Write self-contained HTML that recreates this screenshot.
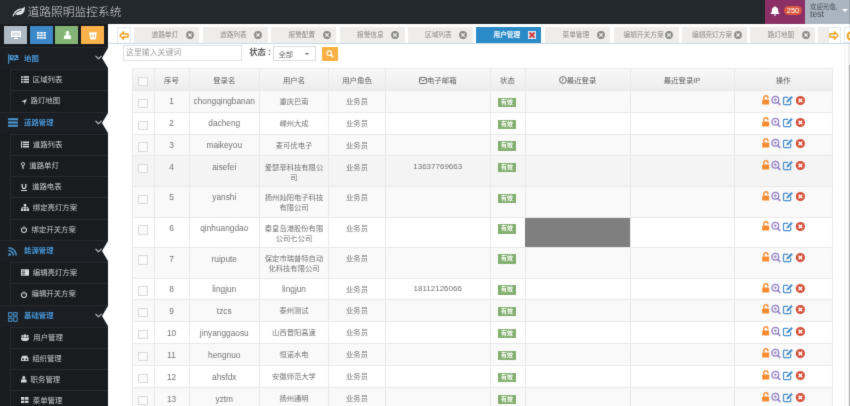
<!DOCTYPE html>
<html lang="zh-CN">
<head>
<meta charset="utf-8">
<title>道路照明监控系统</title>
<style>
html,body{margin:0;padding:0;}
html{overflow:hidden;}
body{width:850px;height:406px;overflow:hidden;background:#fff;position:relative;font-family:"Liberation Sans","Noto Sans CJK SC",sans-serif;font-size:8px;color:#666;}
.abs{position:absolute;}
#navbar{left:0;top:0;width:850px;height:23.5px;background:#22282e;}
#brand{left:27.5px;top:1.5px;font-size:11.75px;font-weight:300;color:#dadada;line-height:20px;white-space:nowrap;}
#w{left:0;top:0;width:850px;height:424px;background:#fff;filter:url(#soft);}
#sidebar{left:0;top:23.5px;width:108px;height:400px;background:#191c1f;}
.sc{top:25.9px;height:18.2px;width:23px;}
.mh{left:0;width:108px;height:21.400px;background:#1b1e22;border-top:1px solid #272b30;box-sizing:border-box;}
.ms{left:10px;width:98px;height:21.400px;border-top:1px solid #272b30;border-left:1px solid #272b30;box-sizing:border-box;}
.mt{white-space:nowrap;line-height:10px;font-size:7.4px;}
.mh .mt{color:#4592d2;font-weight:bold;top:5px;}
.ms .mt{color:#c8cbcf;top:5px;}
.ic{display:block;}
.notch{left:101.7px;width:0;height:0;border-top:10px solid transparent;border-bottom:10px solid transparent;border-right:6.5px solid #fff;}
#tabbar{left:108px;top:23.5px;width:742px;height:20.5px;background:#fff;border-bottom:1.4px solid #cad9e3;box-sizing:border-box;}
.tab{top:27.2px;height:16px;background:#efedec;color:#8a8a8a;font-size:6.7px;line-height:15.5px;white-space:nowrap;}
.tab span.t{position:absolute;top:0;}
.tab.act{background:#2b8bc9;color:#fff;font-weight:bold;}
.cl{position:absolute;top:4px;width:8px;height:8px;}
table{border-collapse:collapse;}
.cell{box-sizing:border-box;border-left:1px solid #e3e3e3;border-top:1px solid #e3e3e3;text-align:center;white-space:nowrap;line-height:10.500px;}
.cb{width:9.5px;height:9.5px;border:1px solid #dadada;background:#fbfbfb;box-sizing:border-box;}
.badge{background:#82af6f;color:#fff;font-size:6px;line-height:9.500px;width:18px;height:9.500px;text-align:center;font-weight:bold;}
</style>
</head>
<body>
<div class="abs" style="left:0;top:0;width:850px;height:23.5px;background:#22282e"></div>
<div class="abs" style="left:0;top:23.5px;width:108px;height:383px;background:#191c1f"></div>
<div class="abs" style="left:805px;top:0;width:45px;height:23.5px;background:#aab5c1"></div>
<svg width="0" height="0" style="position:absolute"><defs><filter id="soft" x="0" y="0" width="100%" height="100%" color-interpolation-filters="sRGB"><feConvolveMatrix order="3" kernelMatrix="0.018 0.135 0.018 0.135 1 0.135 0.018 0.135 0.018" divisor="1.612" edgeMode="duplicate" preserveAlpha="true"/></filter></defs></svg>
<div id="w" class="abs">
<div id="navbar" class="abs"></div>
<svg class="abs" style="left:12px;top:6px" width="13" height="11" viewBox="0 0 13 11"><path d="M0.5 10.500C1.5 6.500 4 3.500 8 2.800c2-.3 3.500-.6 4.800-2.300.3 3.500-.6 7.400-4.800 8.300-2 .4-3.800-.2-4.800-.6-.9.600-1.500 1.500-1.800 2.300z" fill="#dfe3e6"/><path d="M2.500 8.200C4.500 5.800 6.500 4.800 9.500 4.200" stroke="#22282e" stroke-width=".9" fill="none"/></svg>
<div id="brand" class="abs">道路照明监控系统</div>
<div class="abs" style="left:764.5px;top:0;width:40.5px;height:23.5px;background:#8b2f66"></div>
<svg class="abs" style="left:770px;top:6px" width="10" height="10" viewBox="0 0 10 10"><path d="M5 0.300c.5 0 .8.300.8.700 1.700.400 2.400 1.900 2.400 3.600 0 1.500.5 2.500 1.500 3.300h-9.400c1-.8 1.500-1.800 1.500-3.300 0-1.700.7-3.200 2.400-3.600 0-.4.300-.7.800-.7z" fill="#fff"/><path d="M3.800 8.500a1.200 1.200 0 0 0 2.400 0z" fill="#fff"/></svg>
<div class="abs" style="left:784px;top:5.5px;width:18px;height:9px;border-radius:4.5px;background:#d9593f;color:#fff;font-size:7.5px;line-height:9px;text-align:center;">250</div>
<div class="abs" style="left:805px;top:0;width:45px;height:23.5px;background:#aab5c1"></div>
<div class="abs" style="left:810px;top:2.7px;font-size:6.4px;line-height:8px;color:#4a4f55;white-space:nowrap;">欢迎光临,</div>
<div class="abs" style="left:810px;top:10.3px;font-size:8.7px;line-height:9px;color:#4a4f55;white-space:nowrap;">test</div>
<div class="abs" style="left:842px;top:9px;width:0;height:0;border-left:3.5px solid transparent;border-right:3.5px solid transparent;border-top:3.5px solid #fff;"></div>
<div id="sidebar" class="abs"></div>
<div class="abs sc" style="left:4.2px;background:#adb9c4"><svg width="10" height="8" viewBox="0 0 10 8" style="position:absolute;left:6.7px;top:5.6px"><path d="M0.600 0.600h8.800v4.800h-8.800z" fill="#d9dfe5" stroke="#fff" stroke-width="1.200"/><path d="M3 7.500h4M5 5.500v2" stroke="#fff" stroke-width="1.100"/></svg></div>
<div class="abs sc" style="left:29.7px;background:#3c88c9"><svg width="9" height="7" viewBox="0 0 9 7" style="position:absolute;left:7.200px;top:6.200px"><path d="M0 0h2.600v1.800h-2.600zM3.200 0h2.600v1.800h-2.600zM6.400 0h2.600v1.800h-2.600zM0 2.500h2.600v1.800h-2.600zM3.200 2.500h2.600v1.800h-2.600zM6.400 2.500h2.600v1.800h-2.600zM0 5h2.600v1.800h-2.600zM3.200 5h2.600v1.800h-2.600zM6.400 5h2.600v1.800h-2.600z" fill="#f4f8fc"/></svg></div>
<div class="abs sc" style="left:55.2px;background:#85b576"><svg width="7" height="8" viewBox="0 0 7 8" style="position:absolute;left:8.400px;top:5.600px"><circle cx="3.500" cy="2" r="1.900" fill="#fff"/><path d="M0 8v-2c0-1.300 1-1.900 2-1.900h3c1 0 2 .6 2 1.900v2z" fill="#fff"/></svg></div>
<div class="abs sc" style="left:80.7px;background:#fbb24a"><svg width="8" height="8" viewBox="0 0 8 8" style="position:absolute;left:8.200px;top:6px"><path d="M0.200 0.300h7.600l-.9 6.400c-.1.600-.5.900-1.100.9h-3.600c-.6 0-1-.3-1.100-.9z" fill="#fff"/><path d="M2.800 2.200v3.600M5.200 2.200v3.600" stroke="#fbb854" stroke-width=".8"/></svg></div>
<div class="abs mh" style="top:47.2px"><span class="abs" style="left:8px;top:5.7px"><svg width="11" height="10" viewBox="0 0 11 10"><path d="M0.700 0.300v9.400" stroke="#4a9ad8" stroke-width="1.200" fill="none"/><path d="M1.800 1.200c1.500-.8 2.700.5 4.200.2 1.500-.3 2.800-.8 4.300-.2v5c-1.500-.6-2.800-.1-4.300.2-1.500.3-2.700-1-4.200-.2z" fill="#4a9ad8"/><path d="M3.200 2.300h1.600v1.500h-1.600zM6.300 2.600h1.600v1.500h-1.600zM4.800 3.900h1.500v1.500h-1.500zM7.900 3.900h1.500v1.400h-1.500z" fill="#1b1e22"/></svg></span><span class="abs mt" style="left:24px;top:5.7px">地图</span><svg class="abs" style="left:94.5px;top:7.2px" width="7" height="5" viewBox="0 0 7 5"><path d="M0.5 0.8L3.500 3.800L6.500 0.800" fill="none" stroke="#c8ccd0" stroke-width="1.100"/></svg></div>
<div class="abs notch" style="top:47.9px"></div>
<div class="abs ms" style="top:68.8px"><span class="abs" style="left:10px;top:5.8px"><svg width="8" height="7" viewBox="0 0 8 7"><path d="M0 1h1.800M2.500 1h5.500M0 3.500h1.800M2.500 3.500h5.500M0 6h1.800M2.500 6h5.500" stroke="#dfe2e5" stroke-width="1.700"/></svg></span><span class="abs mt" style="left:21.799999999999997px">区域列表</span></div>
<div class="abs ms" style="top:90.3px"><span class="abs" style="left:10px;top:6.3px"><svg width="6" height="6" viewBox="0 0 6 6"><path d="M5.900 0.100L3.300 5.900V2.700H0.100z" fill="#dfe2e5"/></svg></span><span class="abs mt" style="left:19.5px">路灯地图</span></div>
<div class="abs mh" style="top:111.8px"><span class="abs" style="left:8px;top:5.7px"><svg width="10" height="9" viewBox="0 0 10 9"><path d="M0 1.2h10M0 4.5h10M0 7.8h10" stroke="#4a9ad8" stroke-width="2"/></svg></span><span class="abs mt" style="left:24px;top:5px">道路管理</span><svg class="abs" style="left:94.5px;top:7.2px" width="7" height="5" viewBox="0 0 7 5"><path d="M0.5 0.8L3.500 3.800L6.500 0.800" fill="none" stroke="#c8ccd0" stroke-width="1.100"/></svg></div>
<div class="abs notch" style="top:112.5px"></div>
<div class="abs ms" style="top:133.8px"><span class="abs" style="left:10px;top:5.8px"><svg width="8" height="7" viewBox="0 0 8 7"><path d="M0.600 0v7" stroke="#d5d8dc" stroke-width="1.100"/><path d="M2 1.200h6M2 3.500h6M2 5.800h6" stroke="#d5d8dc" stroke-width="1.400"/></svg></span><span class="abs mt" style="left:21.799999999999997px">道路列表</span></div>
<div class="abs ms" style="top:154.8px"><span class="abs" style="left:10px;top:6.3px"><svg width="4" height="7" viewBox="0 0 4 7"><circle cx="2" cy="2.100" r="1.600" fill="none" stroke="#d5d8dc" stroke-width=".9"/><path d="M1.300 4.200h1.400v2.500h-1.400z" fill="#d5d8dc"/></svg></span><span class="abs mt" style="left:18.3px">道路单灯</span></div>
<div class="abs ms" style="top:176.3px"><span class="abs" style="left:10px;top:6.3px"><svg width="6" height="7" viewBox="0 0 6 7"><path d="M1.200 0v2.800a1.800 1.800 0 0 0 3.600 0V0" fill="none" stroke="#d5d8dc" stroke-width="1.300"/><path d="M0 6.500h6" stroke="#d5d8dc" stroke-width="1"/></svg></span><span class="abs mt" style="left:21px">道路电表</span></div>
<div class="abs ms" style="top:197.3px"><span class="abs" style="left:10px;top:5.8px"><svg width="8" height="7" viewBox="0 0 8 7"><path d="M2.8 0h2.4v2.2h-2.4zM0 4.6h2.3v2.4h-2.3zM2.9 4.6h2.3v2.4h-2.3zM5.7 4.6h2.3v2.4h-2.3z" fill="#d5d8dc"/><path d="M4 2v2.6M1.1 4.6v-1.2h5.8v1.2" fill="none" stroke="#d5d8dc" stroke-width=".8"/></svg></span><span class="abs mt" style="left:21.799999999999997px">绑定亮灯方案</span></div>
<div class="abs ms" style="top:218.8px"><span class="abs" style="left:10px;top:6.3px"><svg width="6" height="7" viewBox="0 0 6 7"><path d="M1.700 1.800a2.500 2.500 0 1 0 2.600 0" fill="none" stroke="#d5d8dc" stroke-width="1.100"/><path d="M3 0.200v3" stroke="#d5d8dc" stroke-width="1.100"/></svg></span><span class="abs mt" style="left:20.5px">绑定开关方案</span></div>
<div class="abs mh" style="top:240.3px"><span class="abs" style="left:8px;top:5.7px"><svg width="10" height="9" viewBox="0 0 10 9"><circle cx="1.6" cy="7.6" r="1.3" fill="#4a9ad8"/><path d="M0.4 3.6a5 5 0 0 1 5 5M0.4 0.8a7.8 7.8 0 0 1 7.8 7.8" fill="none" stroke="#4a9ad8" stroke-width="1.5"/></svg></span><span class="abs mt" style="left:24px;top:5px">能源管理</span><svg class="abs" style="left:94.5px;top:7.2px" width="7" height="5" viewBox="0 0 7 5"><path d="M0.5 0.8L3.500 3.800L6.500 0.800" fill="none" stroke="#c8ccd0" stroke-width="1.100"/></svg></div>
<div class="abs notch" style="top:241.0px"></div>
<div class="abs ms" style="top:261.8px"><span class="abs" style="left:10px;top:5.8px"><svg width="8" height="7" viewBox="0 0 8 7"><rect x="0" y="0.3" width="8" height="6.4" fill="#d5d8dc"/><path d="M1 2h3M1 3.6h3M1 5.2h3" stroke="#1a1d21" stroke-width=".7"/></svg></span><span class="abs mt" style="left:21.799999999999997px">编辑亮灯方案</span></div>
<div class="abs ms" style="top:283.3px"><span class="abs" style="left:10px;top:6.3px"><svg width="6" height="7" viewBox="0 0 6 7"><path d="M1.700 1.800a2.500 2.500 0 1 0 2.600 0" fill="none" stroke="#d5d8dc" stroke-width="1.100"/><path d="M3 0.200v3" stroke="#d5d8dc" stroke-width="1.100"/></svg></span><span class="abs mt" style="left:20.5px">编辑开关方案</span></div>
<div class="abs mh" style="top:305.3px"><span class="abs" style="left:8px;top:5.7px"><svg width="10" height="10" viewBox="0 0 10 10"><path d="M0.6 0.6h3.3v3.8h-3.3zM5.6 0.6h3.6v2.6h-3.6zM0.6 6h3.3v3.3h-3.3zM5.6 4.8h3.6v4.5h-3.6z" fill="none" stroke="#4a9ad8" stroke-width="1"/></svg></span><span class="abs mt" style="left:24px;top:5px">基础管理</span><svg class="abs" style="left:94.5px;top:7.2px" width="7" height="5" viewBox="0 0 7 5"><path d="M0.5 0.8L3.500 3.800L6.500 0.800" fill="none" stroke="#c8ccd0" stroke-width="1.100"/></svg></div>
<div class="abs notch" style="top:306.0px"></div>
<div class="abs ms" style="top:326.8px"><span class="abs" style="left:10px;top:5.8px"><svg width="8" height="7" viewBox="0 0 9 8"><circle cx="4.5" cy="2" r="1.8" fill="#d5d8dc"/><circle cx="1.5" cy="2.2" r="1.2" fill="#d5d8dc"/><circle cx="7.5" cy="2.2" r="1.2" fill="#d5d8dc"/><path d="M0 4h9v2.5h-1.5v1.5h-6v-1.5h-1.5z" fill="#d5d8dc"/></svg></span><span class="abs mt" style="left:22.299999999999997px">用户管理</span></div>
<div class="abs ms" style="top:347.6px"><span class="abs" style="left:10px;top:5.8px"><svg width="7.5" height="6.5" viewBox="0 0 8 7"><path d="M1.5 0.8h5l1.5 2.6v3.3h-8v-3.3z" fill="#d5d8dc"/><circle cx="2.2" cy="4.6" r="1" fill="#1a1d21"/><circle cx="5.8" cy="4.6" r="1" fill="#1a1d21"/></svg></span><span class="abs mt" style="left:21.200000000000003px">组织管理</span></div>
<div class="abs ms" style="top:368.8px"><span class="abs" style="left:10px;top:5.8px"><svg width="5.6" height="6.4" viewBox="0 0 7 8"><circle cx="3.5" cy="2" r="1.9" fill="#d5d8dc"/><path d="M0 8v-2.2c0-1.3 1-1.8 2-1.8h3c1 0 2 .5 2 1.8v2.200z" fill="#d5d8dc"/></svg></span><span class="abs mt" style="left:19.6px">职务管理</span></div>
<div class="abs ms" style="top:389.6px"><span class="abs" style="left:10px;top:5.8px"><svg width="7.5" height="6.5" viewBox="0 0 8 7"><path d="M0 0h3.6v3h-3.600zM4.400 0h3.600v3h-3.600zM0 4h3.600v3h-3.600zM4.400 4h3.600v3h-3.600z" fill="#d5d8dc"/></svg></span><span class="abs mt" style="left:21.799999999999997px">菜单管理</span></div>
<div id="tabbar" class="abs"></div>
<div class="abs" style="left:117px;top:26.5px;width:13.5px;height:16.2px;background:#fff;border:1px solid #e4eaef;border-bottom:none;box-sizing:border-box;"><svg style="position:absolute;left:1px;top:3.3px" width="10" height="9" viewBox="0 0 11 10"><path d="M0.900 5L5 1V3.300h5v3.400h-5v2.300z" fill="none" stroke="#f0a020" stroke-width="1.500"/></svg></div>
<div class="abs tab" style="left:134px;width:65px"><span class="t" style="left:17.5px">道路单灯</span><svg class="cl" style="left:51.9px" viewBox="0 0 8 8"><circle cx="4" cy="4" r="3.9" fill="#8a8a8a"/><path d="M2.3 2.3l3.4 3.4M5.7 2.3l-3.4 3.4" stroke="#f4f2f1" stroke-width="1.2"/></svg></div>
<div class="abs tab" style="left:202.5px;width:65px"><span class="t" style="left:17.5px">道路列表</span><svg class="cl" style="left:51.9px" viewBox="0 0 8 8"><circle cx="4" cy="4" r="3.9" fill="#8a8a8a"/><path d="M2.3 2.3l3.4 3.4M5.7 2.3l-3.4 3.4" stroke="#f4f2f1" stroke-width="1.2"/></svg></div>
<div class="abs tab" style="left:271px;width:65px"><span class="t" style="left:17.5px">报警配置</span><svg class="cl" style="left:51.9px" viewBox="0 0 8 8"><circle cx="4" cy="4" r="3.9" fill="#8a8a8a"/><path d="M2.3 2.3l3.4 3.4M5.7 2.3l-3.4 3.4" stroke="#f4f2f1" stroke-width="1.2"/></svg></div>
<div class="abs tab" style="left:339.5px;width:65px"><span class="t" style="left:17.5px">报警信息</span><svg class="cl" style="left:51.9px" viewBox="0 0 8 8"><circle cx="4" cy="4" r="3.9" fill="#8a8a8a"/><path d="M2.3 2.3l3.4 3.4M5.7 2.3l-3.4 3.4" stroke="#f4f2f1" stroke-width="1.2"/></svg></div>
<div class="abs tab" style="left:407.5px;width:65px"><span class="t" style="left:17.5px">区域列表</span><svg class="cl" style="left:51.9px" viewBox="0 0 8 8"><circle cx="4" cy="4" r="3.9" fill="#8a8a8a"/><path d="M2.3 2.3l3.4 3.4M5.7 2.3l-3.4 3.4" stroke="#f4f2f1" stroke-width="1.2"/></svg></div>
<div class="abs tab act" style="left:476px;width:65px"><span class="t" style="left:17.5px">用户管理</span><svg class="cl" style="left:51.9px" viewBox="0 0 8 8"><rect x="0" y="0" width="8" height="8" fill="#dfe6f2"/><path d="M1.5 1.5l5 5M6.5 1.5l-5 5" stroke="#d03a3a" stroke-width="1.9"/></svg></div>
<div class="abs tab" style="left:545px;width:65px"><span class="t" style="left:17.5px">菜单管理</span><svg class="cl" style="left:51.9px" viewBox="0 0 8 8"><circle cx="4" cy="4" r="3.9" fill="#8a8a8a"/><path d="M2.3 2.3l3.4 3.4M5.7 2.3l-3.4 3.4" stroke="#f4f2f1" stroke-width="1.2"/></svg></div>
<div class="abs tab" style="left:613.5px;width:65px"><span class="t" style="left:10px">编辑开关方案</span><svg class="cl" style="left:51.9px" viewBox="0 0 8 8"><circle cx="4" cy="4" r="3.9" fill="#8a8a8a"/><path d="M2.3 2.3l3.4 3.4M5.7 2.3l-3.4 3.4" stroke="#f4f2f1" stroke-width="1.2"/></svg></div>
<div class="abs tab" style="left:682px;width:65px"><span class="t" style="left:10px">编辑亮灯方案</span><svg class="cl" style="left:51.9px" viewBox="0 0 8 8"><circle cx="4" cy="4" r="3.9" fill="#8a8a8a"/><path d="M2.3 2.3l3.4 3.4M5.7 2.3l-3.4 3.4" stroke="#f4f2f1" stroke-width="1.2"/></svg></div>
<div class="abs tab" style="left:750px;width:65px"><span class="t" style="left:17.5px">路灯地图</span><svg class="cl" style="left:51.9px" viewBox="0 0 8 8"><circle cx="4" cy="4" r="3.9" fill="#8a8a8a"/><path d="M2.3 2.3l3.4 3.4M5.7 2.3l-3.4 3.4" stroke="#f4f2f1" stroke-width="1.2"/></svg></div>
<div class="abs tab" style="left:818px;width:10px;"></div>
<div class="abs" style="left:828px;top:26.5px;width:12.5px;height:16.2px;background:#fff;border:1px solid #e4eaef;border-bottom:none;box-sizing:border-box;"><svg style="position:absolute;left:-0.3px;top:3.1px" width="10" height="9" viewBox="0 0 11 10"><path d="M10.100 5L6 1V3.300h-5v3.400h5v2.300z" fill="none" stroke="#f0a020" stroke-width="1.500"/></svg></div>
<div class="abs" style="left:843.5px;top:26.5px;width:10px;height:16.2px;background:#fff;border:1px solid #e4eaef;box-sizing:border-box;"><svg style="position:absolute;left:1px;top:3px" width="10" height="10" viewBox="0 0 10 10"><circle cx="5.5" cy="5" r="3.8" fill="none" stroke="#f0a020" stroke-width="2"/></svg></div>
<div class="abs" style="left:123px;top:44.500px;width:119px;height:16px;border:1px solid #e0e0e0;box-sizing:border-box;background:#fff;"><span class="abs" style="left:2px;top:2.5px;font-size:7.9px;line-height:10px;color:#a0a0a0;white-space:nowrap;">这里输入关键词</span></div>
<div class="abs" style="left:249.3px;top:46.8px;font-size:8.2px;line-height:11px;color:#5a5a5a;font-weight:bold;white-space:nowrap;">状态 :</div>
<div class="abs" style="left:272.5px;top:45.8px;width:43px;height:15.7px;border:1px solid #dcdcdc;box-sizing:border-box;background:#fff;"><span class="abs" style="left:5px;top:2.8px;font-size:7.3px;line-height:10px;color:#666;">全部</span><span class="abs" style="left:31px;top:6.5px;width:0;height:0;border-left:2.2px solid transparent;border-right:2.2px solid transparent;border-top:2.5px solid #666;"></span></div>
<div class="abs" style="left:321.8px;top:46.8px;width:16.2px;height:13.8px;background:#fbb044;"><svg style="position:absolute;left:4px;top:3.3px" width="8" height="8" viewBox="0 0 8 8"><circle cx="3.200" cy="3.200" r="2.300" fill="none" stroke="#fff" stroke-width="1.200"/><path d="M5 5l2.300 2.300" stroke="#fff" stroke-width="1.400"/></svg></div>
<div class="abs" style="left:848px;top:45px;width:3px;height:380px;background:#ececec"></div>
<div class="abs" style="left:849.4px;top:64.5px;width:2px;height:360px;background:#b4b4b4"></div>
<div class="abs" style="left:844.3px;top:45px;width:1px;height:380px;background:#f3f3f3"></div>
<div class="abs" style="left:132px;top:68.1px;width:700.5px;height:22.7px;background:linear-gradient(#f9f9f9,#ececec);"></div>
<div class="abs" style="left:132px;top:90.8px;width:700.5px;height:21.7px;background:#f9f9f9;"></div>
<div class="abs" style="left:132px;top:112.5px;width:700.5px;height:21.6px;background:#fff;"></div>
<div class="abs" style="left:132px;top:134.1px;width:700.5px;height:21.4px;background:#f9f9f9;"></div>
<div class="abs" style="left:132px;top:155.5px;width:700.5px;height:31.0px;background:#f4f4f4;"></div>
<div class="abs" style="left:132px;top:186.5px;width:700.5px;height:30.5px;background:#f9f9f9;"></div>
<div class="abs" style="left:132px;top:217px;width:700.5px;height:30.4px;background:#fff;"></div>
<div class="abs" style="left:132px;top:247.4px;width:700.5px;height:30.8px;background:#f9f9f9;"></div>
<div class="abs" style="left:132px;top:278.2px;width:700.5px;height:21.7px;background:#fff;"></div>
<div class="abs" style="left:132px;top:299.9px;width:700.5px;height:21.9px;background:#f9f9f9;"></div>
<div class="abs" style="left:132px;top:321.8px;width:700.5px;height:22.0px;background:#fff;"></div>
<div class="abs" style="left:132px;top:343.8px;width:700.5px;height:21.9px;background:#f9f9f9;"></div>
<div class="abs" style="left:132px;top:365.7px;width:700.5px;height:22.2px;background:#fff;"></div>
<div class="abs" style="left:132px;top:387.9px;width:700.5px;height:36.1px;background:#f9f9f9;"></div>
<div class="abs" style="left:525px;top:217.5px;width:104.5px;height:29.9px;background:#7f7f7f"></div>
<div class="abs" style="left:132px;top:67.6px;width:701px;height:1px;background:#e9e9e9"></div>
<div class="abs" style="left:132px;top:90.3px;width:701px;height:1px;background:#e9e9e9"></div>
<div class="abs" style="left:132px;top:112.0px;width:701px;height:1px;background:#e9e9e9"></div>
<div class="abs" style="left:132px;top:133.6px;width:701px;height:1px;background:#e9e9e9"></div>
<div class="abs" style="left:132px;top:155.0px;width:701px;height:1px;background:#e9e9e9"></div>
<div class="abs" style="left:132px;top:186.0px;width:701px;height:1px;background:#e9e9e9"></div>
<div class="abs" style="left:132px;top:216.5px;width:701px;height:1px;background:#e9e9e9"></div>
<div class="abs" style="left:132px;top:246.9px;width:701px;height:1px;background:#e9e9e9"></div>
<div class="abs" style="left:132px;top:277.7px;width:701px;height:1px;background:#e9e9e9"></div>
<div class="abs" style="left:132px;top:299.4px;width:701px;height:1px;background:#e9e9e9"></div>
<div class="abs" style="left:132px;top:321.3px;width:701px;height:1px;background:#e9e9e9"></div>
<div class="abs" style="left:132px;top:343.3px;width:701px;height:1px;background:#e9e9e9"></div>
<div class="abs" style="left:132px;top:365.2px;width:701px;height:1px;background:#e9e9e9"></div>
<div class="abs" style="left:132px;top:387.4px;width:701px;height:1px;background:#e9e9e9"></div>
<div class="abs" style="left:131.5px;top:68.1px;width:1px;height:355.9px;background:#e9e9e9"></div>
<div class="abs" style="left:153.5px;top:68.1px;width:1px;height:355.9px;background:#e9e9e9"></div>
<div class="abs" style="left:188.5px;top:68.1px;width:1px;height:355.9px;background:#e9e9e9"></div>
<div class="abs" style="left:259.0px;top:68.1px;width:1px;height:355.9px;background:#e9e9e9"></div>
<div class="abs" style="left:328.0px;top:68.1px;width:1px;height:355.9px;background:#e9e9e9"></div>
<div class="abs" style="left:385.0px;top:68.1px;width:1px;height:355.9px;background:#e9e9e9"></div>
<div class="abs" style="left:489.5px;top:68.1px;width:1px;height:355.9px;background:#e9e9e9"></div>
<div class="abs" style="left:524.5px;top:68.1px;width:1px;height:355.9px;background:#e9e9e9"></div>
<div class="abs" style="left:629.5px;top:68.1px;width:1px;height:355.9px;background:#e9e9e9"></div>
<div class="abs" style="left:733.5px;top:68.1px;width:1px;height:355.9px;background:#e9e9e9"></div>
<div class="abs" style="left:832.0px;top:68.1px;width:1px;height:355.9px;background:#e9e9e9"></div>
<div class="abs" style="left:525px;top:217.6px;width:104.5px;height:29.8px;background:#7f7f7f"></div>
<div class="abs cb" style="left:138px;top:76.6px"></div>
<div class="abs" style="left:154px;top:75.7px;width:35px;text-align:center;font-size:7.4px;line-height:10px;color:#5f5f5f;white-space:nowrap;">序号</div>
<div class="abs" style="left:189px;top:75.7px;width:70.5px;text-align:center;font-size:7.4px;line-height:10px;color:#5f5f5f;white-space:nowrap;">登录名</div>
<div class="abs" style="left:259.5px;top:75.7px;width:69.0px;text-align:center;font-size:7.4px;line-height:10px;color:#5f5f5f;white-space:nowrap;">用户名</div>
<div class="abs" style="left:328.5px;top:75.7px;width:57.0px;text-align:center;font-size:7.4px;line-height:10px;color:#5f5f5f;white-space:nowrap;">用户角色</div>
<div class="abs" style="left:385.5px;top:75.7px;width:104.5px;text-align:center;font-size:7.4px;line-height:10px;color:#5f5f5f;white-space:nowrap;"><svg width="8" height="7" viewBox="0 0 8 7" style="vertical-align:-1.3px;margin-right:0"><rect x="0.5" y="0.5" width="7" height="6" rx="1" fill="none" stroke="#5f5f5f" stroke-width=".9"/><path d="M0.8 1.5l3.200 2.500l3.200-2.500" fill="none" stroke="#5f5f5f" stroke-width=".9"/></svg>电子邮箱</div>
<div class="abs" style="left:490px;top:75.7px;width:35px;text-align:center;font-size:7.4px;line-height:10px;color:#5f5f5f;white-space:nowrap;">状态</div>
<div class="abs" style="left:525px;top:75.7px;width:105px;text-align:center;font-size:7.4px;line-height:10px;color:#5f5f5f;white-space:nowrap;"><svg width="8" height="8" viewBox="0 0 8 8" style="vertical-align:-1px;margin-right:0"><circle cx="4" cy="4" r="3.400" fill="none" stroke="#5f5f5f" stroke-width=".9"/><path d="M4 2v2.200l-1.200 1" fill="none" stroke="#5f5f5f" stroke-width=".8"/></svg>最近登录</div>
<div class="abs" style="left:630px;top:75.7px;width:104px;text-align:center;font-size:7.4px;line-height:10px;color:#5f5f5f;white-space:nowrap;">最近登录IP</div>
<div class="abs" style="left:734px;top:75.7px;width:98.5px;text-align:center;font-size:7.4px;line-height:10px;color:#5f5f5f;white-space:nowrap;">操作</div>
<div class="abs cb" style="left:138px;top:98.8px"></div>
<div class="abs" style="left:154px;top:96.4px;width:35px;text-align:center;font-size:8.3px;line-height:10px;color:#737373;white-space:nowrap;">1</div>
<div class="abs" style="left:189px;top:96.4px;width:70.5px;text-align:center;font-size:8.3px;line-height:10px;color:#737373;white-space:nowrap;">chongqingbanan</div>
<div class="abs" style="left:259.5px;top:96.8px;width:69.0px;text-align:center;font-size:7.3px;line-height:10px;color:#737373;white-space:nowrap;">重庆巴南</div>
<div class="abs" style="left:328.5px;top:96.8px;width:57.0px;text-align:center;font-size:7.3px;line-height:10px;color:#737373;white-space:nowrap;">业务员</div>
<div class="abs badge" style="left:498px;top:97.8px">有效</div>
<svg class="abs" style="left:761.8px;top:95.1px" width="46" height="11" viewBox="0 0 46 11"><path d="M1.700 4.600V2.900a2.100 2.100 0 0 1 4.200 0v.4" fill="none" stroke="#f58a30" stroke-width="1.400"/><rect x="0.200" y="4.400" width="7" height="5.200" rx=".7" fill="#f58a30"/><circle cx="13.300" cy="4.800" r="3.400" fill="none" stroke="#927fc2" stroke-width="1.300"/><path d="M15.800 7.400l2.500 2.600" stroke="#927fc2" stroke-width="1.600"/><path d="M11.700 4.800h3.200M13.300 3.200v3.200" stroke="#927fc2" stroke-width=".9"/><path d="M28.700 5.800v3a.8.800 0 0 1-.8.800h-5.600a.8.800 0 0 1-.8-.8v-5.600a.8.800 0 0 1 .8-.8h3.900" fill="none" stroke="#4a8fcb" stroke-width="1.200"/><path d="M24.300 7.500l.5-2.100 4.500-4.500 1.600 1.600-4.500 4.500z" fill="#4a8fcb"/><circle cx="38.400" cy="5.500" r="4.600" fill="#d4503a"/><path d="M36.600 3.700l3.600 3.600M40.200 3.700l-3.600 3.600" stroke="#fff" stroke-width="1.500"/></svg>
<div class="abs cb" style="left:138px;top:120.5px"></div>
<div class="abs" style="left:154px;top:118.1px;width:35px;text-align:center;font-size:8.3px;line-height:10px;color:#737373;white-space:nowrap;">2</div>
<div class="abs" style="left:189px;top:118.1px;width:70.5px;text-align:center;font-size:8.3px;line-height:10px;color:#737373;white-space:nowrap;">dacheng</div>
<div class="abs" style="left:259.5px;top:118.5px;width:69.0px;text-align:center;font-size:7.3px;line-height:10px;color:#737373;white-space:nowrap;">嵊州大成</div>
<div class="abs" style="left:328.5px;top:118.5px;width:57.0px;text-align:center;font-size:7.3px;line-height:10px;color:#737373;white-space:nowrap;">业务员</div>
<div class="abs badge" style="left:498px;top:119.5px">有效</div>
<svg class="abs" style="left:761.8px;top:116.8px" width="46" height="11" viewBox="0 0 46 11"><path d="M1.700 4.600V2.900a2.100 2.100 0 0 1 4.200 0v.4" fill="none" stroke="#f58a30" stroke-width="1.400"/><rect x="0.200" y="4.400" width="7" height="5.200" rx=".7" fill="#f58a30"/><circle cx="13.300" cy="4.800" r="3.400" fill="none" stroke="#927fc2" stroke-width="1.300"/><path d="M15.800 7.400l2.500 2.600" stroke="#927fc2" stroke-width="1.600"/><path d="M11.700 4.800h3.200M13.300 3.200v3.200" stroke="#927fc2" stroke-width=".9"/><path d="M28.700 5.800v3a.8.800 0 0 1-.8.800h-5.600a.8.800 0 0 1-.8-.8v-5.600a.8.800 0 0 1 .8-.8h3.900" fill="none" stroke="#4a8fcb" stroke-width="1.200"/><path d="M24.300 7.500l.5-2.100 4.500-4.500 1.600 1.600-4.500 4.500z" fill="#4a8fcb"/><circle cx="38.400" cy="5.500" r="4.600" fill="#d4503a"/><path d="M36.600 3.700l3.600 3.600M40.200 3.700l-3.600 3.600" stroke="#fff" stroke-width="1.500"/></svg>
<div class="abs cb" style="left:138px;top:142.1px"></div>
<div class="abs" style="left:154px;top:139.7px;width:35px;text-align:center;font-size:8.3px;line-height:10px;color:#737373;white-space:nowrap;">3</div>
<div class="abs" style="left:189px;top:139.7px;width:70.5px;text-align:center;font-size:8.3px;line-height:10px;color:#737373;white-space:nowrap;">maikeyou</div>
<div class="abs" style="left:259.5px;top:141.1px;width:69.0px;text-align:center;font-size:7.3px;line-height:10px;color:#737373;white-space:nowrap;">麦可优电子</div>
<div class="abs" style="left:328.5px;top:141.1px;width:57.0px;text-align:center;font-size:7.3px;line-height:10px;color:#737373;white-space:nowrap;">业务员</div>
<div class="abs badge" style="left:498px;top:141.1px">有效</div>
<svg class="abs" style="left:761.8px;top:138.4px" width="46" height="11" viewBox="0 0 46 11"><path d="M1.700 4.600V2.900a2.100 2.100 0 0 1 4.200 0v.4" fill="none" stroke="#f58a30" stroke-width="1.400"/><rect x="0.200" y="4.400" width="7" height="5.200" rx=".7" fill="#f58a30"/><circle cx="13.300" cy="4.800" r="3.400" fill="none" stroke="#927fc2" stroke-width="1.300"/><path d="M15.800 7.400l2.500 2.600" stroke="#927fc2" stroke-width="1.600"/><path d="M11.700 4.800h3.200M13.300 3.200v3.200" stroke="#927fc2" stroke-width=".9"/><path d="M28.700 5.800v3a.8.800 0 0 1-.8.800h-5.600a.8.800 0 0 1-.8-.8v-5.600a.8.800 0 0 1 .8-.8h3.900" fill="none" stroke="#4a8fcb" stroke-width="1.200"/><path d="M24.300 7.500l.5-2.100 4.500-4.500 1.600 1.600-4.500 4.500z" fill="#4a8fcb"/><circle cx="38.400" cy="5.500" r="4.600" fill="#d4503a"/><path d="M36.600 3.700l3.600 3.600M40.200 3.700l-3.600 3.600" stroke="#fff" stroke-width="1.500"/></svg>
<div class="abs cb" style="left:138px;top:163.5px"></div>
<div class="abs" style="left:154px;top:162.1px;width:35px;text-align:center;font-size:8.3px;line-height:10px;color:#737373;white-space:nowrap;">4</div>
<div class="abs" style="left:189px;top:162.1px;width:70.5px;text-align:center;font-size:8.3px;line-height:10px;color:#737373;white-space:nowrap;">aisefei</div>
<div class="abs" style="left:259.5px;top:162.5px;width:69.0px;text-align:center;font-size:7.3px;line-height:10px;color:#737373;white-space:nowrap;">爱瑟菲科技有限公<br>司</div>
<div class="abs" style="left:328.5px;top:162.5px;width:57.0px;text-align:center;font-size:7.3px;line-height:10px;color:#737373;white-space:nowrap;">业务员</div>
<div class="abs" style="left:385.5px;top:162.1px;width:104.5px;text-align:center;font-size:8px;line-height:10px;color:#737373;white-space:nowrap;">13637769663</div>
<div class="abs badge" style="left:498px;top:162.5px">有效</div>
<svg class="abs" style="left:761.8px;top:159.8px" width="46" height="11" viewBox="0 0 46 11"><path d="M1.700 4.600V2.900a2.100 2.100 0 0 1 4.200 0v.4" fill="none" stroke="#f58a30" stroke-width="1.400"/><rect x="0.200" y="4.400" width="7" height="5.200" rx=".7" fill="#f58a30"/><circle cx="13.300" cy="4.800" r="3.400" fill="none" stroke="#927fc2" stroke-width="1.300"/><path d="M15.800 7.400l2.500 2.600" stroke="#927fc2" stroke-width="1.600"/><path d="M11.700 4.800h3.200M13.300 3.200v3.200" stroke="#927fc2" stroke-width=".9"/><path d="M28.700 5.800v3a.8.800 0 0 1-.8.800h-5.600a.8.800 0 0 1-.8-.8v-5.600a.8.800 0 0 1 .8-.8h3.900" fill="none" stroke="#4a8fcb" stroke-width="1.200"/><path d="M24.300 7.500l.5-2.100 4.500-4.500 1.600 1.600-4.500 4.500z" fill="#4a8fcb"/><circle cx="38.400" cy="5.500" r="4.600" fill="#d4503a"/><path d="M36.600 3.700l3.600 3.600M40.200 3.700l-3.600 3.600" stroke="#fff" stroke-width="1.500"/></svg>
<div class="abs cb" style="left:138px;top:194.5px"></div>
<div class="abs" style="left:154px;top:192.1px;width:35px;text-align:center;font-size:8.3px;line-height:10px;color:#737373;white-space:nowrap;">5</div>
<div class="abs" style="left:189px;top:192.1px;width:70.5px;text-align:center;font-size:8.3px;line-height:10px;color:#737373;white-space:nowrap;">yanshi</div>
<div class="abs" style="left:259.5px;top:192.5px;width:69.0px;text-align:center;font-size:7.3px;line-height:10px;color:#737373;white-space:nowrap;">扬州灿阳电子科技<br>有限公司</div>
<div class="abs" style="left:328.5px;top:192.5px;width:57.0px;text-align:center;font-size:7.3px;line-height:10px;color:#737373;white-space:nowrap;">业务员</div>
<div class="abs badge" style="left:498px;top:193.5px">有效</div>
<svg class="abs" style="left:761.8px;top:190.8px" width="46" height="11" viewBox="0 0 46 11"><path d="M1.700 4.600V2.900a2.100 2.100 0 0 1 4.200 0v.4" fill="none" stroke="#f58a30" stroke-width="1.400"/><rect x="0.200" y="4.400" width="7" height="5.200" rx=".7" fill="#f58a30"/><circle cx="13.300" cy="4.800" r="3.400" fill="none" stroke="#927fc2" stroke-width="1.300"/><path d="M15.800 7.400l2.500 2.600" stroke="#927fc2" stroke-width="1.600"/><path d="M11.700 4.800h3.200M13.300 3.200v3.200" stroke="#927fc2" stroke-width=".9"/><path d="M28.700 5.800v3a.8.800 0 0 1-.8.800h-5.600a.8.800 0 0 1-.8-.8v-5.600a.8.800 0 0 1 .8-.8h3.900" fill="none" stroke="#4a8fcb" stroke-width="1.200"/><path d="M24.300 7.500l.5-2.100 4.500-4.500 1.600 1.600-4.500 4.500z" fill="#4a8fcb"/><circle cx="38.400" cy="5.500" r="4.600" fill="#d4503a"/><path d="M36.600 3.700l3.600 3.600M40.200 3.700l-3.600 3.600" stroke="#fff" stroke-width="1.500"/></svg>
<div class="abs cb" style="left:138px;top:225.0px"></div>
<div class="abs" style="left:154px;top:222.6px;width:35px;text-align:center;font-size:8.3px;line-height:10px;color:#737373;white-space:nowrap;">6</div>
<div class="abs" style="left:189px;top:222.6px;width:70.5px;text-align:center;font-size:8.3px;line-height:10px;color:#737373;white-space:nowrap;">qinhuangdao</div>
<div class="abs" style="left:259.5px;top:224.0px;width:69.0px;text-align:center;font-size:7.3px;line-height:10px;color:#737373;white-space:nowrap;">秦皇岛港股份有限<br>公司七公司</div>
<div class="abs" style="left:328.5px;top:224.0px;width:57.0px;text-align:center;font-size:7.3px;line-height:10px;color:#737373;white-space:nowrap;">业务员</div>
<div class="abs badge" style="left:498px;top:224.0px">有效</div>
<svg class="abs" style="left:761.8px;top:221.3px" width="46" height="11" viewBox="0 0 46 11"><path d="M1.700 4.600V2.900a2.100 2.100 0 0 1 4.200 0v.4" fill="none" stroke="#f58a30" stroke-width="1.400"/><rect x="0.200" y="4.400" width="7" height="5.200" rx=".7" fill="#f58a30"/><circle cx="13.300" cy="4.800" r="3.400" fill="none" stroke="#927fc2" stroke-width="1.300"/><path d="M15.800 7.400l2.500 2.600" stroke="#927fc2" stroke-width="1.600"/><path d="M11.700 4.800h3.200M13.300 3.200v3.200" stroke="#927fc2" stroke-width=".9"/><path d="M28.700 5.800v3a.8.800 0 0 1-.8.800h-5.600a.8.800 0 0 1-.8-.8v-5.600a.8.800 0 0 1 .8-.8h3.900" fill="none" stroke="#4a8fcb" stroke-width="1.200"/><path d="M24.300 7.500l.5-2.100 4.500-4.500 1.600 1.600-4.500 4.500z" fill="#4a8fcb"/><circle cx="38.400" cy="5.500" r="4.600" fill="#d4503a"/><path d="M36.600 3.700l3.600 3.600M40.200 3.700l-3.600 3.600" stroke="#fff" stroke-width="1.500"/></svg>
<div class="abs cb" style="left:138px;top:255.4px"></div>
<div class="abs" style="left:154px;top:254.0px;width:35px;text-align:center;font-size:8.3px;line-height:10px;color:#737373;white-space:nowrap;">7</div>
<div class="abs" style="left:189px;top:254.0px;width:70.5px;text-align:center;font-size:8.3px;line-height:10px;color:#737373;white-space:nowrap;">ruipute</div>
<div class="abs" style="left:259.5px;top:254.4px;width:69.0px;text-align:center;font-size:7.3px;line-height:10px;color:#737373;white-space:nowrap;">保定市瑞普特自动<br>化科技有限公司</div>
<div class="abs" style="left:328.5px;top:254.4px;width:57.0px;text-align:center;font-size:7.3px;line-height:10px;color:#737373;white-space:nowrap;">业务员</div>
<div class="abs badge" style="left:498px;top:254.4px">有效</div>
<svg class="abs" style="left:761.8px;top:251.7px" width="46" height="11" viewBox="0 0 46 11"><path d="M1.700 4.600V2.900a2.100 2.100 0 0 1 4.200 0v.4" fill="none" stroke="#f58a30" stroke-width="1.400"/><rect x="0.200" y="4.400" width="7" height="5.200" rx=".7" fill="#f58a30"/><circle cx="13.300" cy="4.800" r="3.400" fill="none" stroke="#927fc2" stroke-width="1.300"/><path d="M15.800 7.400l2.500 2.600" stroke="#927fc2" stroke-width="1.600"/><path d="M11.700 4.800h3.200M13.300 3.200v3.200" stroke="#927fc2" stroke-width=".9"/><path d="M28.700 5.800v3a.8.800 0 0 1-.8.800h-5.600a.8.800 0 0 1-.8-.8v-5.600a.8.800 0 0 1 .8-.8h3.900" fill="none" stroke="#4a8fcb" stroke-width="1.200"/><path d="M24.300 7.500l.5-2.100 4.500-4.500 1.600 1.600-4.500 4.500z" fill="#4a8fcb"/><circle cx="38.400" cy="5.500" r="4.600" fill="#d4503a"/><path d="M36.600 3.700l3.600 3.600M40.200 3.700l-3.600 3.600" stroke="#fff" stroke-width="1.500"/></svg>
<div class="abs cb" style="left:138px;top:286.2px"></div>
<div class="abs" style="left:154px;top:283.8px;width:35px;text-align:center;font-size:8.3px;line-height:10px;color:#737373;white-space:nowrap;">8</div>
<div class="abs" style="left:189px;top:283.8px;width:70.5px;text-align:center;font-size:8.3px;line-height:10px;color:#737373;white-space:nowrap;">lingjun</div>
<div class="abs" style="left:259.5px;top:283.8px;width:69.0px;text-align:center;font-size:8.3px;line-height:10px;color:#737373;white-space:nowrap;">lingjun</div>
<div class="abs" style="left:328.5px;top:285.2px;width:57.0px;text-align:center;font-size:7.3px;line-height:10px;color:#737373;white-space:nowrap;">业务员</div>
<div class="abs" style="left:385.5px;top:283.8px;width:104.5px;text-align:center;font-size:8px;line-height:10px;color:#737373;white-space:nowrap;">18112126066</div>
<div class="abs badge" style="left:498px;top:285.2px">有效</div>
<svg class="abs" style="left:761.8px;top:282.5px" width="46" height="11" viewBox="0 0 46 11"><path d="M1.700 4.600V2.900a2.100 2.100 0 0 1 4.200 0v.4" fill="none" stroke="#f58a30" stroke-width="1.400"/><rect x="0.200" y="4.400" width="7" height="5.200" rx=".7" fill="#f58a30"/><circle cx="13.300" cy="4.800" r="3.400" fill="none" stroke="#927fc2" stroke-width="1.300"/><path d="M15.800 7.400l2.500 2.600" stroke="#927fc2" stroke-width="1.600"/><path d="M11.700 4.800h3.200M13.300 3.200v3.200" stroke="#927fc2" stroke-width=".9"/><path d="M28.700 5.800v3a.8.800 0 0 1-.8.800h-5.600a.8.800 0 0 1-.8-.8v-5.600a.8.800 0 0 1 .8-.8h3.900" fill="none" stroke="#4a8fcb" stroke-width="1.200"/><path d="M24.300 7.500l.5-2.100 4.500-4.500 1.600 1.600-4.500 4.500z" fill="#4a8fcb"/><circle cx="38.400" cy="5.500" r="4.600" fill="#d4503a"/><path d="M36.600 3.700l3.600 3.600M40.200 3.700l-3.600 3.600" stroke="#fff" stroke-width="1.500"/></svg>
<div class="abs cb" style="left:138px;top:307.9px"></div>
<div class="abs" style="left:154px;top:305.5px;width:35px;text-align:center;font-size:8.3px;line-height:10px;color:#737373;white-space:nowrap;">9</div>
<div class="abs" style="left:189px;top:305.5px;width:70.5px;text-align:center;font-size:8.3px;line-height:10px;color:#737373;white-space:nowrap;">tzcs</div>
<div class="abs" style="left:259.5px;top:305.9px;width:69.0px;text-align:center;font-size:7.3px;line-height:10px;color:#737373;white-space:nowrap;">泰州测试</div>
<div class="abs" style="left:328.5px;top:305.9px;width:57.0px;text-align:center;font-size:7.3px;line-height:10px;color:#737373;white-space:nowrap;">业务员</div>
<div class="abs badge" style="left:498px;top:306.9px">有效</div>
<svg class="abs" style="left:761.8px;top:304.2px" width="46" height="11" viewBox="0 0 46 11"><path d="M1.700 4.600V2.900a2.100 2.100 0 0 1 4.200 0v.4" fill="none" stroke="#f58a30" stroke-width="1.400"/><rect x="0.200" y="4.400" width="7" height="5.200" rx=".7" fill="#f58a30"/><circle cx="13.300" cy="4.800" r="3.400" fill="none" stroke="#927fc2" stroke-width="1.300"/><path d="M15.800 7.400l2.500 2.600" stroke="#927fc2" stroke-width="1.600"/><path d="M11.700 4.800h3.200M13.300 3.200v3.200" stroke="#927fc2" stroke-width=".9"/><path d="M28.700 5.800v3a.8.800 0 0 1-.8.800h-5.600a.8.800 0 0 1-.8-.8v-5.600a.8.800 0 0 1 .8-.8h3.900" fill="none" stroke="#4a8fcb" stroke-width="1.200"/><path d="M24.300 7.500l.5-2.100 4.500-4.500 1.600 1.600-4.500 4.500z" fill="#4a8fcb"/><circle cx="38.400" cy="5.500" r="4.600" fill="#d4503a"/><path d="M36.600 3.700l3.600 3.600M40.200 3.700l-3.600 3.600" stroke="#fff" stroke-width="1.500"/></svg>
<div class="abs cb" style="left:138px;top:329.8px"></div>
<div class="abs" style="left:154px;top:328.4px;width:35px;text-align:center;font-size:8.3px;line-height:10px;color:#737373;white-space:nowrap;">10</div>
<div class="abs" style="left:189px;top:328.4px;width:70.5px;text-align:center;font-size:8.3px;line-height:10px;color:#737373;white-space:nowrap;">jinyanggaosu</div>
<div class="abs" style="left:259.5px;top:327.8px;width:69.0px;text-align:center;font-size:7.3px;line-height:10px;color:#737373;white-space:nowrap;">山西晋阳高速</div>
<div class="abs" style="left:328.5px;top:327.8px;width:57.0px;text-align:center;font-size:7.3px;line-height:10px;color:#737373;white-space:nowrap;">业务员</div>
<div class="abs badge" style="left:498px;top:328.8px">有效</div>
<svg class="abs" style="left:761.8px;top:326.1px" width="46" height="11" viewBox="0 0 46 11"><path d="M1.700 4.600V2.900a2.100 2.100 0 0 1 4.200 0v.4" fill="none" stroke="#f58a30" stroke-width="1.400"/><rect x="0.200" y="4.400" width="7" height="5.200" rx=".7" fill="#f58a30"/><circle cx="13.300" cy="4.800" r="3.400" fill="none" stroke="#927fc2" stroke-width="1.300"/><path d="M15.800 7.400l2.500 2.600" stroke="#927fc2" stroke-width="1.600"/><path d="M11.700 4.800h3.200M13.300 3.200v3.200" stroke="#927fc2" stroke-width=".9"/><path d="M28.700 5.800v3a.8.800 0 0 1-.8.800h-5.600a.8.800 0 0 1-.8-.8v-5.600a.8.800 0 0 1 .8-.8h3.900" fill="none" stroke="#4a8fcb" stroke-width="1.200"/><path d="M24.300 7.500l.5-2.100 4.500-4.500 1.600 1.600-4.500 4.500z" fill="#4a8fcb"/><circle cx="38.400" cy="5.500" r="4.600" fill="#d4503a"/><path d="M36.600 3.700l3.600 3.600M40.200 3.700l-3.600 3.600" stroke="#fff" stroke-width="1.500"/></svg>
<div class="abs cb" style="left:138px;top:351.8px"></div>
<div class="abs" style="left:154px;top:350.4px;width:35px;text-align:center;font-size:8.3px;line-height:10px;color:#737373;white-space:nowrap;">11</div>
<div class="abs" style="left:189px;top:350.4px;width:70.5px;text-align:center;font-size:8.3px;line-height:10px;color:#737373;white-space:nowrap;">hengnuo</div>
<div class="abs" style="left:259.5px;top:349.8px;width:69.0px;text-align:center;font-size:7.3px;line-height:10px;color:#737373;white-space:nowrap;">恒诺水电</div>
<div class="abs" style="left:328.5px;top:349.8px;width:57.0px;text-align:center;font-size:7.3px;line-height:10px;color:#737373;white-space:nowrap;">业务员</div>
<div class="abs badge" style="left:498px;top:350.8px">有效</div>
<svg class="abs" style="left:761.8px;top:348.1px" width="46" height="11" viewBox="0 0 46 11"><path d="M1.700 4.600V2.900a2.100 2.100 0 0 1 4.200 0v.4" fill="none" stroke="#f58a30" stroke-width="1.400"/><rect x="0.200" y="4.400" width="7" height="5.200" rx=".7" fill="#f58a30"/><circle cx="13.300" cy="4.800" r="3.400" fill="none" stroke="#927fc2" stroke-width="1.300"/><path d="M15.800 7.400l2.500 2.600" stroke="#927fc2" stroke-width="1.600"/><path d="M11.700 4.800h3.200M13.300 3.200v3.200" stroke="#927fc2" stroke-width=".9"/><path d="M28.700 5.800v3a.8.800 0 0 1-.8.800h-5.600a.8.800 0 0 1-.8-.8v-5.600a.8.800 0 0 1 .8-.8h3.900" fill="none" stroke="#4a8fcb" stroke-width="1.200"/><path d="M24.300 7.500l.5-2.100 4.500-4.500 1.600 1.600-4.500 4.500z" fill="#4a8fcb"/><circle cx="38.400" cy="5.500" r="4.600" fill="#d4503a"/><path d="M36.600 3.700l3.600 3.600M40.200 3.700l-3.600 3.600" stroke="#fff" stroke-width="1.500"/></svg>
<div class="abs cb" style="left:138px;top:373.7px"></div>
<div class="abs" style="left:154px;top:372.3px;width:35px;text-align:center;font-size:8.3px;line-height:10px;color:#737373;white-space:nowrap;">12</div>
<div class="abs" style="left:189px;top:372.3px;width:70.5px;text-align:center;font-size:8.3px;line-height:10px;color:#737373;white-space:nowrap;">ahsfdx</div>
<div class="abs" style="left:259.5px;top:371.7px;width:69.0px;text-align:center;font-size:7.3px;line-height:10px;color:#737373;white-space:nowrap;">安徽师范大学</div>
<div class="abs" style="left:328.5px;top:371.7px;width:57.0px;text-align:center;font-size:7.3px;line-height:10px;color:#737373;white-space:nowrap;">业务员</div>
<div class="abs badge" style="left:498px;top:372.7px">有效</div>
<svg class="abs" style="left:761.8px;top:370.0px" width="46" height="11" viewBox="0 0 46 11"><path d="M1.700 4.600V2.900a2.100 2.100 0 0 1 4.200 0v.4" fill="none" stroke="#f58a30" stroke-width="1.400"/><rect x="0.200" y="4.400" width="7" height="5.200" rx=".7" fill="#f58a30"/><circle cx="13.300" cy="4.800" r="3.400" fill="none" stroke="#927fc2" stroke-width="1.300"/><path d="M15.800 7.400l2.500 2.600" stroke="#927fc2" stroke-width="1.600"/><path d="M11.700 4.800h3.200M13.300 3.200v3.200" stroke="#927fc2" stroke-width=".9"/><path d="M28.700 5.800v3a.8.800 0 0 1-.8.800h-5.600a.8.800 0 0 1-.8-.8v-5.600a.8.800 0 0 1 .8-.8h3.900" fill="none" stroke="#4a8fcb" stroke-width="1.200"/><path d="M24.300 7.500l.5-2.100 4.500-4.500 1.600 1.600-4.500 4.500z" fill="#4a8fcb"/><circle cx="38.400" cy="5.500" r="4.600" fill="#d4503a"/><path d="M36.600 3.700l3.600 3.600M40.200 3.700l-3.600 3.600" stroke="#fff" stroke-width="1.500"/></svg>
<div class="abs cb" style="left:138px;top:395.9px"></div>
<div class="abs" style="left:154px;top:393.5px;width:35px;text-align:center;font-size:8.3px;line-height:10px;color:#737373;white-space:nowrap;">13</div>
<div class="abs" style="left:189px;top:393.5px;width:70.5px;text-align:center;font-size:8.3px;line-height:10px;color:#737373;white-space:nowrap;">yztm</div>
<div class="abs" style="left:259.5px;top:393.9px;width:69.0px;text-align:center;font-size:7.3px;line-height:10px;color:#737373;white-space:nowrap;">扬州通明</div>
<div class="abs" style="left:328.5px;top:393.9px;width:57.0px;text-align:center;font-size:7.3px;line-height:10px;color:#737373;white-space:nowrap;">业务员</div>
<div class="abs badge" style="left:498px;top:394.9px">有效</div>
<svg class="abs" style="left:761.8px;top:392.2px" width="46" height="11" viewBox="0 0 46 11"><path d="M1.700 4.600V2.900a2.100 2.100 0 0 1 4.200 0v.4" fill="none" stroke="#f58a30" stroke-width="1.400"/><rect x="0.200" y="4.400" width="7" height="5.200" rx=".7" fill="#f58a30"/><circle cx="13.300" cy="4.800" r="3.400" fill="none" stroke="#927fc2" stroke-width="1.300"/><path d="M15.800 7.400l2.500 2.600" stroke="#927fc2" stroke-width="1.600"/><path d="M11.700 4.800h3.200M13.300 3.200v3.200" stroke="#927fc2" stroke-width=".9"/><path d="M28.700 5.800v3a.8.800 0 0 1-.8.800h-5.600a.8.800 0 0 1-.8-.8v-5.600a.8.800 0 0 1 .8-.8h3.900" fill="none" stroke="#4a8fcb" stroke-width="1.200"/><path d="M24.300 7.500l.5-2.100 4.500-4.500 1.600 1.600-4.500 4.500z" fill="#4a8fcb"/><circle cx="38.400" cy="5.500" r="4.600" fill="#d4503a"/><path d="M36.600 3.700l3.600 3.600M40.200 3.700l-3.600 3.600" stroke="#fff" stroke-width="1.500"/></svg>
</div>
</body>
</html>
